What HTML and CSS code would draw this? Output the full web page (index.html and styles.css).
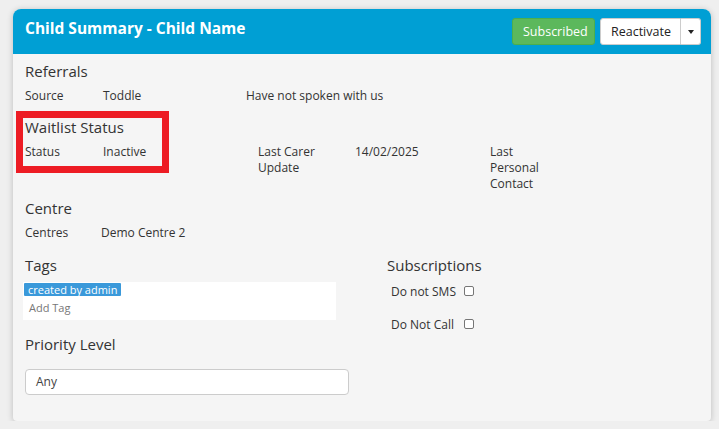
FILE: index.html
```html
<!DOCTYPE html>
<html>
<head>
<meta charset="utf-8">
<link rel="stylesheet" href="styles.css">
</head>
<body>
<div class="card">
  <div class="card-header">
    <h2 class="title">Child Summary - Child Name</h2>
    <div class="actions">
      <button class="btn btn-success">Subscribed</button>
      <div class="btn-group">
        <button class="btn btn-default">Reactivate</button>
        <button class="btn btn-default btn-caret"><span class="caret"></span></button>
      </div>
    </div>
  </div>
  <div class="card-body">
    <div class="highlight"></div>
    <h3 class="heading h-referrals">Referrals</h3>
    <div class="row row-referrals">
      <span>Source</span><span>Toddle</span><span>Have not spoken with us</span>
    </div>
    <h3 class="heading h-waitlist">Waitlist Status</h3>
    <div class="row row-waitlist">
      <span>Status</span><span>Inactive</span><span class="wrap-label">Last Carer Update</span><span>14/02/2025</span><span class="narrow">Last Personal Contact</span>
    </div>
    <h3 class="heading h-centre">Centre</h3>
    <div class="row row-centre">
      <span>Centres</span><span>Demo Centre 2</span>
    </div>
    <div class="split">
      <div class="col-left">
        <h3 class="heading">Tags</h3>
        <div class="tags-box">
          <span class="tag">created by admin</span>
          <div class="add-tag">Add Tag</div>
        </div>
        <h3 class="heading h-priority">Priority Level</h3>
        <div class="select">Any</div>
      </div>
      <div class="col-right">
        <h3 class="heading">Subscriptions</h3>
        <label class="check-row first"><span class="check-label">Do not SMS</span><input type="checkbox" class="check"></label>
        <label class="check-row second"><span class="check-label">Do Not Call</span><input type="checkbox" class="check"></label>
      </div>
    </div>
  </div>
</div>
</body>
</html>
```

FILE: styles.css
```css
* { box-sizing: border-box; }
html, body { margin: 0; background: #efefef; }
body {
  padding: 9px 8px 0 13px;
  font-family: "Open Sans", "DejaVu Sans", sans-serif;
  color: #333;
}
.card {
  width: 698px;
  height: 412px;
  background: #f5f5f5;
  border-radius: 8px 8px 4px 4px;
  box-shadow: 0 1px 6px rgba(0,0,0,0.22);
  overflow: hidden;
}
.card-header {
  height: 45px;
  background: #009fd4;
  display: flex;
  justify-content: space-between;
  align-items: center;
  padding: 0 10px 0 12px;
}
.title {
  margin: 0;
  align-self: flex-start;
  margin-top: 9px;
  font-size: 15.5px;
  line-height: 20px;
  font-weight: 700;
  color: #fff;
}
.actions { display: flex; gap: 5px; }
.btn {
  height: 27px;
  font-family: inherit;
  font-size: 12.5px;
  border-radius: 3px;
  padding: 0 10px;
  cursor: pointer;
}
.btn-success {
  width: 83px;
  background: #5cb85c;
  border: 1px solid #4cae4c;
  color: #fff;
}
.btn-group { display: flex; }
.btn-default {
  background: #fff;
  border: 1px solid #ccc;
  color: #222;
  width: 81px;
  border-radius: 3px 0 0 3px;
}
.btn-caret {
  width: 20px;
  padding: 0;
  border-left: none;
  border-radius: 0 3px 3px 0;
  display: flex;
  align-items: center;
  justify-content: center;
}
.caret {
  width: 0; height: 0;
  border-left: 3.5px solid transparent;
  border-right: 3.5px solid transparent;
  border-top: 4px solid #222;
}
.card-body {
  position: relative;
  padding: 7px 12px 0 12px;
}
.heading {
  margin: 0;
  font-size: 15px;
  line-height: 20px;
  font-weight: 500;
  color: #333;
}
.row {
  display: grid;
  font-size: 12px;
  line-height: 16px;
  color: #333;
  margin-top: 7px;
}
.row-referrals { grid-template-columns: 78px 143px auto; }
.h-waitlist { margin-top: 13px; }
.row-waitlist { grid-template-columns: 78px 155px 97px 135px 60px; }
.wrap-label { max-width: 72px; }
.narrow { max-width: 56px; }
.h-centre { margin-top: 6px; }
.row-centre { grid-template-columns: 76px auto; }
.split {
  display: grid;
  grid-template-columns: 362px auto;
  margin-top: 14px;
}
.tags-box {
  margin: 7px 0 0 -2px;
  width: 313px;
  height: 38px;
  background: #fff;
  padding: 1px;
  display: flex;
  flex-direction: column;
  align-items: flex-start;
}
.tag {
  display: block;
  background: #3a99da;
  color: #fff;
  font-size: 11px;
  line-height: 13px;
  padding: 0 4px;
  border-radius: 1px;
}
.add-tag {
  font-size: 11px;
  line-height: 14px;
  color: #777;
  margin: 5px 0 0 5px;
}
.h-priority { margin-top: 14px; }
.select {
  margin-top: 15px;
  width: 324px;
  height: 26px;
  background: #fff;
  border: 1px solid #ccc;
  border-radius: 4px;
  font-size: 12px;
  line-height: 24px;
  padding-left: 10px;
  color: #444;
}
.check-row {
  display: flex;
  align-items: flex-start;
  font-size: 12px;
  line-height: 16px;
  padding-left: 4px;
}
.check-row.first { margin-top: 9px; }
.check-row.second { margin-top: 17px; }
.check-label { width: 73px; }
.check {
  appearance: none;
  -webkit-appearance: none;
  margin: 2px 0 0 0;
  width: 10px;
  height: 10px;
  border: 1px solid #767676;
  border-radius: 2px;
  background: #fff;
}
.highlight {
  position: absolute;
  left: 3px;
  top: 57px;
  width: 153px;
  height: 62px;
  border: 7px solid #ed1c24;
  pointer-events: none;
}
```
